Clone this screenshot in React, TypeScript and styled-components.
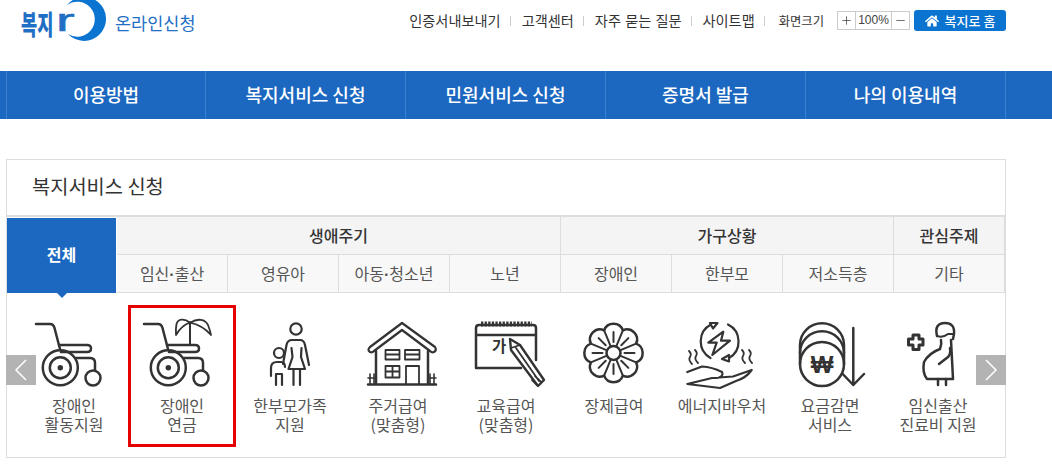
import React from 'react'
import styled, { createGlobalStyle } from 'styled-components'
import { FaHome } from 'react-icons/fa'
import { Plus, Minus } from 'lucide-react'

const GlobalStyle = createGlobalStyle`
  html, body {
    margin: 0;
    padding: 0;
    background: #fff;
  }
  body {
    font-family: 'Noto Sans CJK KR', 'Liberation Sans', sans-serif;
    color: #444;
  }
`

const links = ['인증서내보내기', '고객센터', '자주 묻는 질문', '사이트맵']
const menus = ['이용방법', '복지서비스 신청', '민원서비스 신청', '증명서 발급', '나의 이용내역']
const groups = [
  { label: '생애주기', span: 4 },
  { label: '가구상황', span: 3 },
  { label: '관심주제', span: 1 },
]
const subs = ['임신·출산', '영유아', '아동·청소년', '노년', '장애인', '한부모', '저소득층', '기타']

const Wheelchair = ({ dx = 0 }: { dx?: number }) => (
  <g transform={`translate(${dx} 0)`}>
    <path d="M1 4H15Q18.500 4 19.500 8L25 29" />
    <path d="M24 25H52Q56 25 56 28.500T52 32H26" />
    <circle cx="25.300" cy="47.700" r="17.500" />
    <circle cx="25.300" cy="47.700" r="10.500" />
    <circle cx="25.300" cy="47.700" r="1.500" fill="#333" />
    <path d="M41 38H55Q60 38 60 43V50" />
    <circle cx="58" cy="58" r="7.500" />
  </g>
)

const PalmChair = () => (
  <>
    <Wheelchair dx={1} />
    <path d="M48 24V2" strokeWidth="2" />
    <path d="M48 2.700C42 -2 36 -1 34.500 4Q33.500 9 34 15Q40 5 48 2.700Z" strokeWidth="1.800" />
    <path d="M48 2.700C56 -2 63 -1 66 5Q68 10 69 15Q60 5 48 2.700Z" strokeWidth="1.800" />
  </>
)

const Family = () => (
  <g strokeWidth="2.200">
    <circle cx="46" cy="9" r="5.700" />
    <path d="M33 44L36.500 25Q37.500 20 42 20H50Q54 20 55 25L59 45" />
    <path d="M41.500 28L42.500 37L38.500 49H55L51 37L51.500 28" />
    <path d="M43.500 49V65M50 49V65" />
    <circle cx="29" cy="33" r="5" />
    <path d="M21 56V48Q21 42 27 42H31Q35 42 35 47" />
    <path d="M26 65V54H32V65" />
  </g>
)

const House = () => (
  <g transform="translate(1 0)">
    <path d="M11 32Q8 30 11 27L43 3L76 27Q78 30 75 32Q73 33 71 31L43 10L15 31Q13 33 11 32Z" strokeWidth="2.200" />
    <path d="M17 31V64M69 31V64M9 64.500H77" strokeWidth="2.500" />
    <path d="M26.500 30H40.500V39.500H26.500ZM26.500 34.500H40.500M46 30H60.500V39.500H46ZM46 34.500H60.500" strokeWidth="1.800" />
    <path d="M26.500 46H40.500V57.500H26.500ZM33.500 46V57.500M26.500 51.500H40.500" strokeWidth="1.800" />
    <path d="M47 64V46H60V64" strokeWidth="1.800" />
    <path d="M11 54V64M15 54V64M9 58H17M71 54V64M75 54V64M69 58H77" strokeWidth="1.600" />
  </g>
)

const Education = () => (
  <g transform="translate(-1 0)">
    <path d="M11 48V8Q11 5 14 5H68Q71 5 71 8V40M11 48H56M11 15H71" strokeWidth="2.500" />
    <path d="M16 4H67" strokeWidth="5" strokeDasharray="2.300 1.300" strokeLinecap="butt" />
    <IconLetter x="27" y="32">가</IconLetter>
    <path d="M45 19L55 25L79 60L73 66L46 30Z" fill="#fff" strokeWidth="2.400" />
    <path d="M46 28L55 25M70 56L76 62M67 60L72 65M51 28L74 61" strokeWidth="1.800" />
  </g>
)

const petals = Array.from({ length: 8 }, (_, i) => (i * Math.PI) / 4)

const Flower = () => {
  // 꽃잎 8개를 호로 이어 그림
  const pt = (a: number, r: number) =>
    `${(39.5 + Math.cos(a) * r).toFixed(2)} ${(33 + Math.sin(a) * r).toFixed(2)}`
  const outline =
    petals
      .map((a, i) => {
        const from = a - Math.PI / 8
        const to = a + Math.PI / 8
        return `${i === 0 ? 'M' : 'L'}${pt(from, 24.5)}A10 10 0 0 1 ${pt(to, 24.5)}`
      })
      .join('') + 'Z'
  return (
    <>
      <path d={outline} />
      <circle cx="39.5" cy="33" r="7" />
      {petals.map((a) => (
        <path key={a} d={`M${pt(a + Math.PI / 8, 7)}L${pt(a + Math.PI / 8, 24.5)}`} strokeWidth="2" />
      ))}
      {petals.map((a) => (
        <path key={a} d={`M${pt(a, 11)}L${pt(a, 21)}`} strokeWidth="2" />
      ))}
    </>
  )
}

const Energy = () => (
  <g strokeWidth="2.200">
    <path d="M28.500 38A19 19 0 0 1 29 4.500" />
    <path d="M46 4.500A19 19 0 0 1 47 38" />
    <path d="M28 3L35.500 3L31 8.500ZM40 39L47 35L47 41.500Z" />
    <path d="M41.300 11.700L26.300 22.700H34.700L30.300 35L48 20.700H39Z" />
    <path d="M7 31Q10 34 8 37T10 44M13 30Q16 33 14 36T16 43M60 30Q63 33 61 36T63 43M67 30Q70 33 68 36T70 43" strokeWidth="1.800" />
    <path d="M5.300 52L20 46.500Q30 47 40 52Q42 56 36 58H30M30 58L51 56.500L69.700 50Q64 58 54 61L38 68L5.300 64Z" />
  </g>
)

const Coins = () => (
  <>
    <path d="M10 44V25A22 21.700 0 0 1 54 25V44" />
    <path d="M10 33A22 21.700 0 0 1 54 33" />
    <circle cx="32" cy="44" r="22" />
    <CoinSign x="32" y="53">₩</CoinSign>
    <path d="M63.300 8V65M52.700 54L63.300 65L74 54" />
  </>
)

const Pregnant = () => (
  <>
    <path d="M15 15H21V19H25V25H21V29.500H15V25H10.500V19H15Z" strokeWidth="3" />
    <path d="M39 16Q36 3 47 3Q57 3 56 14L55 19" />
    <path d="M39 16Q45 18 50 14L56 14" strokeWidth="2" />
    <path d="M43 20Q44 24 42 29Q31 33 26 42Q24 53 29 59H55L53 20" />
    <path d="M41 44L50 37Q53 34 52 28" />
    <path d="M40 59V65M48 59V65" />
  </>
)

const services = [
  { label: ['장애인', '활동지원'], icon: <Wheelchair dx={1} /> },
  { label: ['장애인', '연금'], icon: <PalmChair />, selected: true },
  { label: ['한부모가족', '지원'], icon: <Family /> },
  { label: ['주거급여', '(맞춤형)'], icon: <House /> },
  { label: ['교육급여', '(맞춤형)'], icon: <Education /> },
  { label: ['장제급여'], icon: <Flower /> },
  { label: ['에너지바우처'], icon: <Energy /> },
  { label: ['요금감면', '서비스'], icon: <Coins /> },
  { label: ['임신출산', '진료비 지원'], icon: <Pregnant /> },
]

const App = () => (
  <>
    <GlobalStyle />
    <Page>
      <TopBar>
        <Logo>
          <LogoWord>복지</LogoWord>
          <LogoLetter>r</LogoLetter>
          <LogoMoon viewBox="60 0 50 44">
            <path d="M67 5A22 22 0 1 1 68 34A17.500 17.500 0 1 0 67 5Z" />
          </LogoMoon>
          <LogoSub>온라인신청</LogoSub>
        </Logo>
        <Utils>
          {links.map((link) => (
            <UtilLink key={link}>{link}</UtilLink>
          ))}
          <ZoomLabel>화면크기</ZoomLabel>
          <ZoomBox>
            <ZoomButton>
              <Plus size={13} strokeWidth={1.3} />
            </ZoomButton>
            <ZoomValue>100%</ZoomValue>
            <ZoomButton>
              <Minus size={13} strokeWidth={1.3} />
            </ZoomButton>
          </ZoomBox>
          <HomeButton>
            <FaHome size={14} />
            복지로 홈
          </HomeButton>
        </Utils>
      </TopBar>
      <Nav>
        {menus.map((menu) => (
          <NavItem key={menu}>{menu}</NavItem>
        ))}
      </Nav>
      <Panel>
        <PanelTitle>복지서비스 신청</PanelTitle>
        <Tabs>
          <AllTab>전체</AllTab>
          {groups.map((group) => (
            <GroupCell key={group.label} $span={group.span}>
              {group.label}
            </GroupCell>
          ))}
          {subs.map((sub) => {
            const [head, tail] = sub.split('·')
            return (
              <SubCell key={sub}>
                {head}
                {tail && <SubDot>·</SubDot>}
                {tail}
              </SubCell>
            )
          })}
        </Tabs>
        <Services>
          <SlideButton $side="left">
            <svg width="14" height="24" viewBox="0 0 14 24">
              <path d="M12 2L2 12L12 22" />
            </svg>
          </SlideButton>
          {services.map((service) => (
            <Service key={service.label.join()} $selected={service.selected}>
              <ServiceIcon viewBox="0 -4 80 72">{service.icon}</ServiceIcon>
              <ServiceLabel>
                {service.label[0]}
                {service.label[1] && <br />}
                {service.label[1]}
              </ServiceLabel>
            </Service>
          ))}
          <SlideButton $side="right">
            <svg width="14" height="24" viewBox="0 0 14 24">
              <path d="M2 2L12 12L2 22" />
            </svg>
          </SlideButton>
        </Services>
      </Panel>
    </Page>
  </>
)

const Page = styled.div`
  width: 1052px;
  height: 470px;
  overflow: hidden;
`

const TopBar = styled.header`
  height: 71px;
  box-sizing: border-box;
  width: 1006px;
  display: flex;
  justify-content: space-between;
  align-items: flex-start;
`

const Logo = styled.div`
  position: relative;
  display: flex;
  align-items: center;
  height: 44px;
  padding-left: 21px;
`

const LogoWord = styled.span`
  width: 35px;
  font-size: 22px;
  line-height: 44px;
  font-weight: 900;
  white-space: nowrap;
  color: #1f6fc4;
  transform: scale(0.8, 1.25);
  transform-origin: left center;
`

const LogoLetter = styled.span`
  width: 59px;
  font: 400 31px/44px 'Liberation Sans', sans-serif;
  color: #1f6fc4;
  -webkit-text-stroke: 0.6px #1f6fc4;
  transform: translateY(-1px) scaleX(1.8);
  transform-origin: left center;
`

// 초승달은 글자 r 위에 겹쳐 그림
const LogoMoon = styled.svg`
  position: absolute;
  left: 60px;
  top: 0;
  width: 50px;
  height: 44px;
  fill: #0b74d1;
`

const LogoSub = styled.span`
  font-size: 17.500px;
  color: #1f6fc4;
`

const Utils = styled.div`
  display: flex;
  align-items: center;
  height: 21px;
  margin-top: 10px;
`

const UtilLink = styled.a`
  font-size: 14.200px;
  word-spacing: 1px;
  line-height: 21px;
  color: #333;
  padding-right: 10px;
  margin-right: 11px;
  position: relative;
  &::after {
    content: '';
    position: absolute;
    right: 0;
    top: 6px;
    height: 10px;
    width: 1px;
    background: #ccc;
  }
`

const ZoomLabel = styled.span`
  font-size: 12.300px;
  color: #333;
  margin: 0 13px 0 3px;
`

const ZoomBox = styled.div`
  display: flex;
  height: 19px;
  box-sizing: border-box;
  border: 1px solid #ccc;
  margin-right: 4px;
`

const ZoomButton = styled.span`
  width: 17px;
  display: flex;
  align-items: center;
  justify-content: center;
  color: #333;
`

const ZoomValue = styled.span`
  width: 37px;
  box-sizing: border-box;
  border-left: 1px solid #ccc;
  border-right: 1px solid #ccc;
  text-align: center;
  font: 12px/17px 'Liberation Sans', sans-serif;
  color: #444;
`

const HomeButton = styled.a`
  width: 92px;
  height: 21px;
  display: flex;
  align-items: center;
  justify-content: center;
  gap: 6px;
  border-radius: 3px;
  background: #0b74d1;
  color: #fff;
  font-size: 13px;
  font-weight: 500;
`

const Nav = styled.nav`
  height: 48px;
  background: #1c68c0;
  padding-left: 6px;
  display: flex;
`

const NavItem = styled.a`
  width: 200px;
  box-sizing: border-box;
  border-right: 1px solid #3d80cf;
  text-align: center;
  font-size: 18px;
  font-weight: 500;
  line-height: 47px;
  color: #fff;
  &:first-child {
    border-left: 1px solid #3d80cf;
  }
`

const Panel = styled.section`
  width: 1000px;
  height: 299px;
  box-sizing: border-box;
  margin: 40px 0 0 6px;
  border: 1px solid #ddd;
`

const PanelTitle = styled.h2`
  margin: 0;
  height: 57px;
  box-sizing: border-box;
  border-bottom: 2px solid #ddd;
  padding-left: 25px;
  font-size: 19.800px;
  font-weight: 400;
  line-height: 51px;
  color: #333;
`

const Tabs = styled.div`
  display: grid;
  grid-template-columns: 110px repeat(8, 111px);
  grid-template-rows: 38px 38px;
`

const AllTab = styled.div`
  grid-row: 1 / span 2;
  position: relative;
  margin: 1px 1px 0 0;
  background: #1c68c0;
  color: #fff;
  font-size: 16px;
  font-weight: 700;
  text-align: center;
  line-height: 72px;
  &::after {
    content: '';
    position: absolute;
    left: 50%;
    margin-left: -5px;
    bottom: -5px;
    border: 5px solid transparent;
    border-bottom: 0;
    border-top-color: #1c68c0;
  }
`

const GroupCell = styled.div<{ $span: number }>`
  grid-column: span ${(p) => p.$span};
  box-sizing: border-box;
  background: #f4f4f4;
  border-right: 1px solid #ddd;
  border-bottom: 1px solid #ddd;
  text-align: center;
  font-size: 16px;
  font-weight: 500;
  line-height: 36px;
  color: #333;
`

const SubCell = styled.div`
  box-sizing: border-box;
  background: #f8f8f8;
  border-right: 1px solid #ddd;
  border-bottom: 1px solid #ddd;
  text-align: center;
  font-size: 16px;
  line-height: 36px;
  color: #555;
`

const SubDot = styled.span`
  font-family: 'Liberation Sans', sans-serif;
  font-weight: 700;
`

const Services = styled.div`
  position: relative;
  display: flex;
  padding: 12px 0 0 13px;
`

const SlideButton = styled.div<{ $side: 'left' | 'right' }>`
  position: absolute;
  top: 62px;
  ${(p) => (p.$side === 'left' ? 'left: -1px;' : 'right: -1px;')}
  width: 30px;
  height: 30px;
  display: flex;
  align-items: center;
  justify-content: center;
  background: #b3b3b3;
  z-index: 1;
  svg {
    fill: none;
    stroke: #fff;
    stroke-width: 1.500;
  }
`

const Service = styled.div<{ $selected?: boolean }>`
  width: 108px;
  height: 142px;
  flex: none;
  box-sizing: border-box;
  padding-top: 11px;
  text-align: center;
  box-shadow: ${(p) => (p.$selected ? 'inset 0 0 0 3px #e60000' : 'none')};
`

const ServiceIcon = styled.svg`
  display: block;
  width: 80px;
  height: 72px;
  margin: 0 auto 8px;
  overflow: visible;
  fill: none;
  stroke: #333;
  stroke-width: 2.500;
  stroke-linecap: round;
  stroke-linejoin: round;
`

const IconLetter = styled.text`
  font-size: 15.500px;
  font-weight: 700;
  fill: #333;
  stroke: none;
`

const CoinSign = styled.text`
  font-family: 'Liberation Sans', sans-serif;
  font-size: 24px;
  font-weight: 700;
  text-anchor: middle;
  fill: #333;
  stroke: none;
`

const ServiceLabel = styled.div`
  font-size: 16px;
  line-height: 19px;
  color: #555;
`

export default App
